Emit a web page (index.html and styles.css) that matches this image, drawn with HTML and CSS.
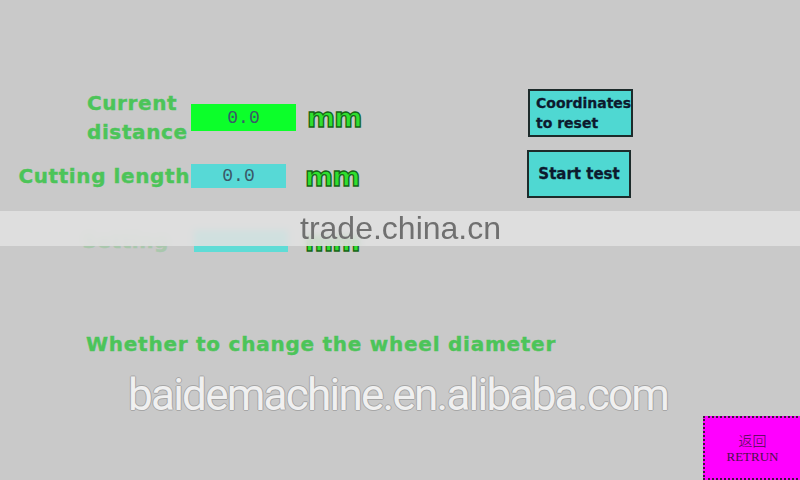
FILE: index.html
```html
<!DOCTYPE html>
<html lang="en">
<head>
    <meta charset="UTF-8">
    <meta name="viewport" content="width=device-width, initial-scale=1.0">
    <title>Wheel diameter test</title>
    <link rel="stylesheet" href="styles.css">
</head>
<body>
    <div class="screen">
        <div class="top">
            <div class="form">
                <div class="row row-distance">
                    <div class="label">Current<br>distance</div>
                    <div class="field field-green">0.0</div>
                    <div class="unit">mm</div>
                </div>
                <div class="row row-length">
                    <div class="label">Cutting length</div>
                    <div class="field field-cyan">0.0</div>
                    <div class="unit">mm</div>
                </div>
                <div class="row row-wheel">
                    <div class="label label-faded">Setting</div>
                    <div class="field field-cyan field-small"></div>
                    <div class="unit">mm</div>
                </div>
            </div>
            <div class="controls">
                <div class="btn btn-reset">Coordinates<br>to reset</div>
                <div class="btn btn-start">Start test</div>
            </div>
        </div>

        <div class="prompt">Whether to change the wheel diameter</div>

        <div class="btn-return">
            <span class="cn">返回</span>
            <span class="en">RETRUN</span>
        </div>
    </div>

    <!-- watermarks laid over the screen -->
    <div class="band">
        <span class="band-text">trade.china.cn</span>
    </div>
    <div class="shop-mark">baidemachine.en.alibaba.com</div>
</body>
</html>
```

FILE: styles.css
```css
body {
    margin: 0;
    width: 800px;
    height: 480px;
    overflow: hidden;
    position: relative;
    background-color: #c9c9c9;
    font-family: "DejaVu Sans", sans-serif;
}
.screen {
    display: flex;
    flex-direction: column;
    height: 480px;
}
.top {
    display: flex;
    padding-top: 89px;
}
.form {
    width: 527px;
    display: flex;
    flex-direction: column;
}
.row {
    display: flex;
    align-items: center;
}
.label {
    width: 191px;
    text-align: right;
    white-space: nowrap;
    color: #4cc459; /* panel green */
    font-weight: bold;
    font-size: 20px;
    line-height: 29px;
    letter-spacing: 0.6px;
    -webkit-text-stroke: 0.4px #4cc459;
}
.row-distance {
    margin-top: 3px;
    height: 51px;
}
.row-distance .label {
    text-align: left;
    padding-left: 87px;
    box-sizing: border-box;
}
.row-length {
    margin-top: 18px;
    height: 30px;
}
.row-length .label {
    padding-right: 1px;
    box-sizing: border-box;
}
.row-wheel {
    margin-top: 35px;
    height: 30px;
}
.label-faded {
    padding-right: 22px;
    box-sizing: border-box;
    opacity: 0.25;
}
.field {
    display: flex;
    align-items: center;
    justify-content: center;
    font-family: "Liberation Mono", monospace;
    font-size: 18px;
    color: #3a5868;
}
.field-green {
    width: 105px;
    height: 27px;
    background-color: #0cff2a;
}
.field-cyan {
    width: 95px;
    height: 24px;
    background-color: #57d9d6;
}
.field-small {
    width: 94px;
    height: 22px;
    margin-left: 3px;
    background-color: #5edcd6;
}
.unit {
    font-weight: bold;
    font-size: 27px;
    letter-spacing: -1px;
    color: #2ee02e;
    -webkit-text-stroke: 1.3px #176417;
    margin-left: 11px;
}
.row-length .unit {
    margin-left: 19px;
}
.row-wheel .unit {
    margin-left: 17px;
}
.controls {
    display: flex;
    flex-direction: column;
    gap: 13px;
    margin-left: 1px;
}
.btn {
    width: 105px;
    height: 48px;
    box-sizing: border-box;
    border: 2px solid #1d2b2b;
    background-color: #4fd8d2;
    color: #0c1a2e;
    font-weight: bold;
    font-size: 14px;
    -webkit-text-stroke: 0.3px #0c1a2e;
    display: flex;
    flex-direction: column;
    justify-content: center;
    overflow: hidden;
}
.btn-reset {
    padding-left: 6px;
    line-height: 20px;
    white-space: nowrap;
}
.btn-start {
    width: 104px;
    margin-left: -1px;
    align-items: center;
    font-size: 15px;
}
.prompt {
    margin-top: 76px;
    padding-left: 86px;
    color: #4cc459;
    font-weight: bold;
    font-size: 20px;
    letter-spacing: 0.75px;
    -webkit-text-stroke: 0.4px #4cc459;
}
.btn-return {
    margin-top: auto;
    align-self: flex-end;
    width: 99px;
    height: 64px;
    margin-right: -2px;
    box-sizing: border-box;
    border: 2px dotted #3a1a3a;
    background-color: #ff00ff;
    color: #4a104a;
    display: flex;
    flex-direction: column;
    align-items: center;
    justify-content: center;
    gap: 1px;
}
.btn-return .cn {
    font-family: "Noto Sans CJK SC", sans-serif;
    font-weight: 300;
    font-size: 14px;
    line-height: 15px;
}
.btn-return .en {
    font-family: "Liberation Serif", serif;
    font-size: 13px;
    line-height: 15px;
}
.band {
    position: absolute;
    left: 0;
    top: 211px;
    width: 800px;
    height: 35px;
    background-color: rgba(224, 224, 224, 0.88);
    backdrop-filter: blur(3px);
}
.band-text {
    position: absolute;
    left: 300px;
    top: -1px;
    font-family: "Liberation Sans", sans-serif;
    font-size: 32px;
    color: #707070;
}
.shop-mark {
    position: absolute;
    left: 128px;
    top: 373px;
    font-family: Roboto, sans-serif;
    font-size: 44px;
    line-height: 1;
    letter-spacing: -1.75px;
    color: #f0f0f0;
    text-shadow: 1px 0 0 #a6a6a6, -1px 0 0 #a6a6a6, 0 1px 0 #a6a6a6, 0 -1px 0 #a6a6a6;
}
```
